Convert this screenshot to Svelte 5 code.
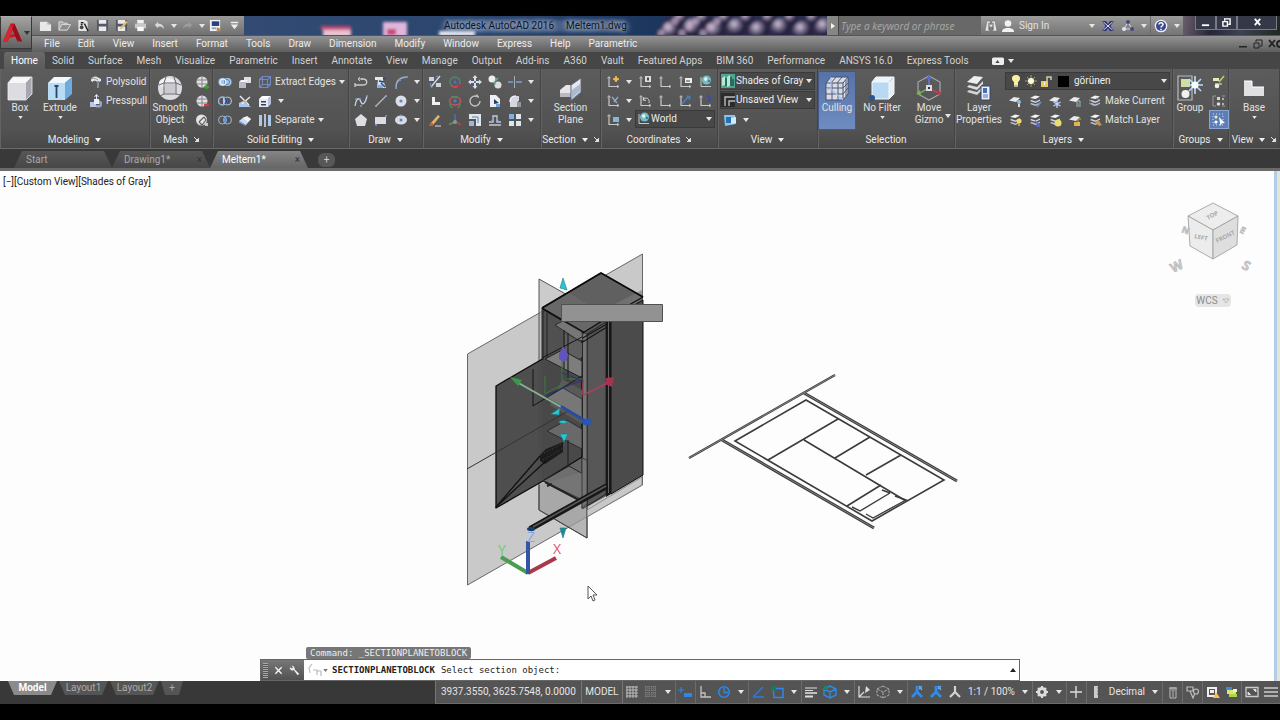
<script>
  const down = '<path d="M4 5.500h6L7 9.500z" fill="#eee"/>';
  const axes = '<path d="M3 2v9.500h9.500" fill="none" stroke="#c9c9c9" stroke-width="1.200"/><path d="M1.500 3.500 3 1.500l1.500 2M11 10l2 1.500-2 1.500" fill="none" stroke="#c9c9c9" stroke-width=".8"/>';
  const sheets = '<path d="m2 4 5-2.500 5 1L7.500 5z" fill="#f2f2f4"/><path d="m2 7 1.500-1 4 1.500L12 5.500v1.200L7.500 9z" fill="#d8d9e2"/><path d="m2 10 1.500-1 4 1.500L12 8.500v1.200L7.500 12z" fill="#c3c5d4"/>';
  const oneSheet = '<path d="M1 6.500 6 3l6 1-4 4z" fill="#e9e9ee"/>';

  const icons = {
    down,
    newdoc: '<path d="M1 3h8l4 3v7H1z" fill="#e8e8e8"/><path d="M9 3v3h4" fill="#aaa"/>',
    open: '<path d="M1 12V3h4l1 1.500h4V6" fill="#a9a9a9" stroke="#ddd"/><path d="m1 12 3-6h9.500L10 12z" fill="#8e8e8e" stroke="#ddd"/>',
    opensheet: '<path d="M1.500 1h7l3 2v10h-10z" fill="#e5e5e5"/><path d="m8 5 4 8M4 4h3M4 6h2" stroke="#222" stroke-width="1.500"/><circle cx="5" cy="9" r="2" fill="#444"/>',
    save: '<path d="M1 1h12v12H1z" fill="#555a62"/><path d="M3 1h8v4H3zM3 8h8v5H3z" fill="#e9e9ee"/>',
    saveas: '<path d="M1 1h12v12H1z" fill="#555a62"/><path d="M3 1h8v4H3zM3 8h8v5H3z" fill="#e9e9ee"/><path d="m6 9 6-7 1.500 1.500-6 7-2 .5z" fill="#e9c268"/>',
    print: '<path d="M3.500 1h7v4h-7z" fill="#f1f1f1"/><path d="M1 5h12v5H1z" fill="#c9c9c9"/><path d="M3.500 8.500h7V13h-7z" fill="#fafafa"/>',
    undo: '<path d="M5.500 3 2 6.500 5.500 10V8c4 0 5 .5 6 3 .6-4-2-6-6-6z" fill="#dadada"/>',
    redo: '<path d="M8.500 3 12 6.500 8.500 10V8c-4 0-5 .5-6 3-.6-4 2-6 6-6z" fill="#9d9d9d"/>',
    sheetset: '<path d="M1 1h11v12H1z" fill="#f2f2f2"/><path d="M3 2.500h8v5H3z" fill="#27417a"/><path d="M3 9h5v2H3z" fill="#8aa0c0"/><path d="m9 9 4 2-2 2.500-3-1z" fill="#c98345"/>',
    more: '<path d="M3 3h8v1.500H3zM3 6h8l-4 5z" fill="#eee"/>',
    binoc: '<path d="M3 2h3v3l1 .5L8 5V2h3l2 10H8.500V8h-3v4H1z" fill="#e5e5e5" stroke="#777" stroke-width=".6"/><path d="M5 4v7M9 4v7" stroke="#555"/>',
    person: '<circle cx="7" cy="4.500" r="3.300" fill="#f2f2f2"/><path d="M1 13c0-3 2-3.500 4.500-4h3c2.500.5 4.500 1 4.500 4z" fill="#f2f2f2"/>',
    exchange: '<path d="M1 2h4l2 3 2-3h4L9.500 7l3.500 5H9L7 9l-2 3H1l3.500-5z" fill="#2c2f78"/><path d="m2.500 3 9 8M11.500 3l-9 8" stroke="#dfe0f4"/>',
    share: '<path d="M7 3 3 10h8z" fill="none" stroke="#d5d5e5"/><circle cx="7" cy="3" r="2" fill="#424a80"/><circle cx="3" cy="10" r="2" fill="#e4e4ef"/><circle cx="11" cy="10" r="2" fill="#424a80"/>',
    help: '<circle cx="7" cy="7" r="6.300" fill="#f0f1f8"/><circle cx="7" cy="7" r="5" fill="#3a4a90"/><path d="M5 5.500C5 3 9 3 9 5.500 9 7 7 7 7 8.500M7 9.800v1.400" fill="none" stroke="#fff" stroke-width="1.500"/>',
    ribbonplay: '<rect x="1" y="3.500" width="12" height="7.500" rx="1.500" fill="#eee"/><path d="M4.500 9h4L6.500 6z" fill="#444"/>',

    polysolid: '<path d="M2 4c1-2 4-3 6-2l4 2v2l-2 1v5l-2 1V7C6 5 4 6 4 7L2 6z" fill="#e4e4ea"/><path d="M8 6v7l2-1V6z" fill="#8c8d99"/><path d="m2 4 3-1 4 2" stroke="#777" fill="none" stroke-width=".7"/>',
    presspull: '<path d="M1 8h6v5H1z" fill="#bcc5e6"/><path d="M5 5h5v5H5z" fill="#eceefa"/><path d="m10 6 3 2v4l-3-2zM7 11h4l2 1-2 1.500H7z" fill="#95a3d5"/><path d="M7.500 5V1M5.500 3l2-2.500 2 2.500" stroke="#e6e9ff" fill="none"/>',
    meshplus: '<ellipse cx="7" cy="7" rx="5.500" ry="5.500" fill="#e1e1e3"/><path d="M2 5h10M2 9h10M7 2v10" stroke="#828288"/><path d="M9 12h5M11.500 9.500v5" stroke="#3e9f35" stroke-width="2"/>',
    meshminus: '<ellipse cx="7" cy="7" rx="5.500" ry="5.500" fill="#e1e1e3"/><path d="M2 5h10M2 9h10M7 2v10" stroke="#828288"/><path d="M9 11h5" stroke="#d23d39" stroke-width="2.200"/>',
    meshrefine: '<circle cx="6.500" cy="7" r="5.500" fill="#e4e4e6"/><path d="m4 9 5-5M9 4l2 3-4 5-3-3" fill="none" stroke="#5f5f63" stroke-width="1.200"/><path d="M10 10h3v3h-3z" fill="#c9c9cc"/>',
    union: '<circle cx="4.500" cy="7" r="4" fill="#a6caec"/><circle cx="9.500" cy="7" r="4" fill="#a6caec"/><circle cx="9" cy="7" r="2.500" fill="none" stroke="#5b82b2"/><circle cx="5" cy="7" r="3" fill="none" stroke="#eef6ff"/>',
    subtract: '<circle cx="9.500" cy="7" r="4" fill="none" stroke="#c2c9d6"/><circle cx="4.500" cy="7" r="4" fill="none" stroke="#98b7df" stroke-width="1.500"/><path d="M5 3.500c3 1 3 6 0 7z" fill="#a8cdf1"/><path d="M7 4c2 2 2 4 0 6" stroke="#234c8d" stroke-width="1.500" fill="none"/>',
    intersect: '<circle cx="4.500" cy="7" r="4" fill="none" stroke="#9bb8da"/><circle cx="9.500" cy="7" r="4" fill="none" stroke="#9bb8da"/><path d="M7 4c2 2 2 4 0 6-2-2-2-4 0-6z" fill="#5f9bdc"/>',
    presspl: '<path d="M6 2h7v6H8v2H6z" fill="#dcdde6"/><path d="M1 7h7v6H1z" fill="#b9bbc9"/><path d="M1 7 3 5h7L8 7z" fill="#f4f4fa"/>',
    slice: '<path d="M1 13V9l4-2 8 6z" fill="#a8c7ef"/><path d="m2 2 9 9M12 3 4 10" stroke="#e8ecf5" stroke-width="1.400"/><path d="m5 6 3 1-1 2z" fill="#e39b40"/>',
    thicken: '<path d="m1 8 5-4 7 2-5 6z" fill="#c9dcf3"/><path d="m1 8 7 4v1L1 9.500z" fill="#7fa5d6"/><path d="m5 5 4-2 4 3-3 3z" fill="#f2f4f8"/>',
    extractedges: '<path d="M1.500 4.500h8v8h-8zM4.500 1.500h8v8h-8zM1.500 4.500l3-3M9.500 4.500l3-3M9.500 12.500l3-3M1.500 12.500l3-3" fill="none" stroke="#7088c4" stroke-width="1.100"/>',
    facecube: '<path d="M1 5h9v8H1z" fill="#e7eaf4"/><path d="m1 5 3-3h9l-3 3z" fill="#fff"/><path d="m10 5 3-3v8l-3 3z" fill="#b8c0db"/><path d="M3 7h5v1.500H3zM3 10h5v1.500H3z" fill="#31425f"/>',
    separate: '<path d="M1 2h3v11H1z" fill="#a9c9ee"/><path d="M10 2h3v11h-3z" fill="#a9c9ee"/><path d="M7 1v13" stroke="#eef" stroke-width="1.400"/>',

    polyline: '<path d="M1 10h8c5 0 5-6 0-6H7M1 8v4" fill="none" stroke="#c8cad0" stroke-width="1.300"/><path d="M9 4H4M4 4l2-2M4 4l2 2" stroke="#c8cad0" fill="none"/>',
    spline3: '<path d="M1 2h8v3H1z" fill="#e8e9ee"/><path d="m4 4 5 1 3 8H3z" fill="#cfe0f5"/><path d="M5 6l5 1M9 3l3 1M7 8l4 4" stroke="#31486e" stroke-width="1.400" fill="none"/><path d="M4 10h5v3H3z" fill="#7fb0e6"/>',
    arc: '<path d="M2 13C2 6 6 2 13 2" fill="none" stroke="#9cabc8" stroke-width="1.500"/><path d="M1 12h2v2H1zM5 4h2v2H5zM12 1h2v2h-2z" fill="#6c93c8"/>',
    spline: '<path d="M1 12C3 1 6 5 7 8s4 3 6-6" fill="none" stroke="#cdd2dc" stroke-width="1.300"/><path d="M1 5h2M6 12h2M12 2h2M5 5h2" stroke="#6e9bd3" stroke-width="1.600"/>',
    line: '<path d="M2 12 12 2" stroke="#b8bac0" stroke-width="1.200"/><path d="M1 12h2M11 2h2" stroke="#8cabda" stroke-width="1.500"/>',
    circle: '<circle cx="7" cy="7" r="5.500" fill="#dcdfe8"/><circle cx="7" cy="7" r="1.600" fill="#6186c2"/>',
    polygon: '<path d="m7 1 6 5-2 7H3L1 6z" fill="#dedee2"/>',
    rect: '<path d="M1 4h11v7H1z" fill="#dcdce0"/><path d="M11 2h2v2h-2zM1 11h2v2H1z" fill="#6390c8"/>',
    ellipse: '<ellipse cx="7" cy="7" rx="6" ry="4.500" fill="#dadce3"/><circle cx="7" cy="7" r="1.500" fill="#5a82c2"/><circle cx="7" cy="2.500" r="1" fill="#7ba1da"/>',

    meshedit: '<path d="M1 2h5v4H1zM8 8h5v4H8z" fill="#cfd3dc"/><path d="M12 1 3 12" stroke="#c8d5e9" stroke-width="1.500"/><path d="m8 2 2-1M2 8l2 5" stroke="#659ad9"/>',
    gizrot: '<circle cx="7" cy="7" r="5" fill="none" stroke="#4a8b67" stroke-width="1.400"/><path d="M3 10a5 5 0 0 0 8 0" stroke="#c74d4b" fill="none" stroke-width="1.400"/><path d="M7 3v4l4 3" fill="none" stroke="#4760b0" stroke-width="1.400"/><circle cx="7" cy="7" r="1.500" fill="#5570bb"/><circle cx="11.500" cy="11" r="1.800" fill="#b8303c"/>',
    move: '<path d="M7 0 9.500 3H8v3h3V4.500L14 7l-3 2.500V8H8v3h1.500L7 14l-2.500-3H6V8H3v1.500L0 7l3-2.500V6h3V3H4.500z" fill="#d5dff0"/><path d="M6 6h2v2H6z" fill="#5778af"/>',
    copy: '<circle cx="4" cy="4" r="3.500" fill="#eee"/><circle cx="10" cy="10" r="3.500" fill="#ddd"/><path d="m7 6 3-3M8 9 5 7" stroke="#69b19b" stroke-width="1.500"/>',
    trim: '<path d="M0 7h5M8 7h6" stroke="#77a3dc" stroke-width="1.500"/><path d="M6.500 1v12" stroke="#a9abb3"/>',
    lshape: '<path d="M4 3h3v5h5v3H4z" fill="#f0f0f3"/>',
    gizscale: '<ellipse cx="7" cy="7" rx="5.500" ry="4" fill="none" stroke="#c25461" stroke-width="1.500"/><path d="M2 10a5 5 0 0 0 10 0M3 3h7" fill="none" stroke="#469554" stroke-width="1.400"/><circle cx="7" cy="7" r="1.800" fill="#5a74c1"/>',
    rotate: '<circle cx="7" cy="7" r="5" fill="none" stroke="#bfc1c6" stroke-width="1.400" stroke-dasharray="27 4"/><path d="m9 0 2 3-4 0z" fill="#bfc1c6"/>',
    mirror: '<path d="M2 1h6l4 4v8H2z" fill="#eceef2"/><path d="M6 5 11 9 6 10z" fill="#243a6a"/><path d="M8 10h4v3H8z" fill="#77a2d9"/>',
    fillet: '<path d="M2 13V7c0-3 2-5 5-5h4v5h-1v6z" fill="#d5d7dd"/><path d="M2 8c0-4 2-6 6-6" stroke="#eef" fill="none" stroke-width="1.500"/><path d="M9 8h4v5H9z" fill="#94979f"/>',
    erase: '<path d="m2 11 8-9 2 1.500L5 12z" fill="#e7b36b"/><path d="M2 10h3v3H1z" fill="#d85a2b"/><path d="M7 13h6" stroke="#ddd"/>',
    gizmove: '<path d="M7 9V1" stroke="#4e6cae" stroke-width="1.600"/><path d="M7 9 1 11.500" stroke="#4ba04e" stroke-width="1.600"/><path d="m7 9 6 2.500" stroke="#c0444a" stroke-width="1.600"/><circle cx="7" cy="9" r="2" fill="#909297"/>',
    scale: '<path d="M1 1h12v12H8V6H1z" fill="#e0e4ec"/><path d="M1 8h5v5H1z" fill="#9cb6dc"/><path d="M4 4h6v6" stroke="#5b83bd" fill="none"/>',
    offset: '<path d="M1 12h12M1 9h4V3h4v6h4" fill="none" stroke="#c4c9d4" stroke-width="1.400"/><path d="M5 5 3 9M9 5l2 4" stroke="#6b93cb"/>',
    array: '<path d="M1 1h5v5H1z" fill="#79b1e9"/><path d="M8 1h5v5H8zM1 8h5v5H1zM8 8h5v5H8z" fill="#dde5ef"/>',

    ucs: axes,
    ucsy: axes + '<path d="m10 1 1 2.500 2 .5-2 1-1 2-1-2-2-1 2-.500z" fill="#f6bc45" stroke="#f6bc45"/>',
    ucsv: axes + '<path d="M6 3 11 9M8 8 12 3" stroke="#8ea8ce" stroke-width="1.400"/>',
    ucsb: axes + '<path d="M7 4h6v5H7z" fill="#86b7db"/>',
    ucsd: axes + '<path d="M7 1h6v6H7z" fill="#ddd"/><path d="M9 2.500h2v3H9z" fill="#444"/>',
    ucsf: axes + '<path d="M7 3h7v5H7z" fill="#eee"/><path d="M8 6h4" stroke="#444"/>',
    globe: '<path d="M3 2v9.500h10" fill="none" stroke="#c9c9c9"/><circle cx="8.500" cy="5" r="4.500" fill="#74bcc7"/><path d="M6 3c3-2 4 0 3 2s-3 1-3-2z" fill="#e7f2ea"/><path d="M10 6h2" stroke="#2b6d82" stroke-width="1.500"/>',
    ucsback: axes + '<path d="M5 6c3-4 7-1 6 3M5 6l3 .5M5 6l1-3" fill="none" stroke="#d5d5d5"/>',
    ucsz: axes + '<path d="m4 10 6-7M9 2l3 1-1 3" stroke="#4382ce" stroke-width="1.400" fill="none"/>',
    ucs3: axes + '<path d="M9 2c4 0 4 4 1 5" stroke="#3948b8" stroke-width="1.800" fill="none"/>',
    visual: '<path d="M0 0h14v14H0z" fill="#4fa58e"/><path d="M1 4 4 2v9l-3 1zM6 3l3-2v11l-3 1z" fill="#b8e7d5"/><path d="M5 4v8M10 3v9M12 5v7" stroke="#174f45" stroke-width="1.300"/>',
    viewicon: '<path d="M0 0h14v14H0z" fill="#2c2c2c"/><path d="M4 13V4h10M8 13V8h6" fill="none" stroke="#bbb" stroke-width="1.400"/>',
    navview: '<path d="M1 2h11l1 9-11 2z" fill="#8ac4ee"/><path d="M3 4h5v6H3z" fill="#2572b2"/><path d="m8 5 5-1v6l-5 1z" fill="#d1ecfc"/>',

    bulb: '<path d="M7 1c5 0 5 5 2 7v3H5V8C2 6 2 1 7 1z" fill="#f8efa0"/><path d="M5 11h4v2H5z" fill="#b3b5b8"/>',
    sun: '<path d="M7 1v12M1 7h12M3 3l8 8M11 3l-8 8" stroke="#a19d74"/><circle cx="7" cy="7" r="3" fill="#fffbd4"/>',
    unlock: '<path d="M2 7h7v6H2z" fill="#f0c85e"/><path d="M8 7V3h4v3" fill="none" stroke="#d1c9ac" stroke-width="1.500"/><path d="M5 8h1v3H5z" fill="#fff"/>',
    layoff: oneSheet + '<circle cx="11" cy="8" r="2" fill="#8ac2df"/><path d="M10 10h2v3h-2z" fill="#ddd"/>',
    layiso: sheets + '<path d="M9 13 13 8" stroke="#6c91d2" stroke-width="1.500"/>',
    layfrz: oneSheet + '<path d="M9 6v8M5.500 8l7 4M12.500 8l-7 4" stroke="#c5d2ff" stroke-width="1.300"/>',
    laylock: oneSheet + '<path d="M8 9h5v4H8z" fill="#74868a"/><path d="M9 9V7h3v2" stroke="#9ec1bd" fill="none"/>',
    laycur: sheets + '<path d="m1 6 5 3M1 9l5 3M8 4l4 2" stroke="#8e9cb4"/>',
    layon: sheets + '<circle cx="11" cy="8" r="2.500" fill="#f5d873"/><path d="M10 10h2v3h-2z" fill="#c39d42"/>',
    layuniso: sheets + '<path d="m7 8 5 5M8 13h4" stroke="#596fd0" stroke-width="1.500"/>',
    laythaw: sheets + '<circle cx="10" cy="10" r="3.500" fill="#eadf6c"/>',
    layunlock: oneSheet + '<path d="M6 9h6v4H6z" fill="#e1b44f"/><path d="M10 9V6h3" stroke="#c6a861" fill="none"/>',
    laymatch: sheets + '<path d="m7 9 3-2 4 5-3 1z" fill="#cb9250"/>',
    ungroup: '<path d="M1 3h6v3H1z" fill="#e7ebac"/><path d="m7 7 5-6M3 9h7" stroke="#b1d46d" stroke-width="1.600"/><circle cx="5" cy="11" r="2.300" fill="#eee"/>',
    groupedit: '<path d="M4 2H1v10h3M10 2h3M10 12h3" fill="none" stroke="#999"/><path d="M5 3h3v3H5z" fill="#d5d9c2"/><circle cx="6.500" cy="10" r="1.800" fill="#ddd"/><path d="M11 4v2M11 9v2" stroke="#ccc" stroke-width="1.500"/>',
    groupsel: '<path d="M1 1h10v11H1z" fill="none" stroke="#d7e1f5" stroke-dasharray="1 2"/><circle cx="4" cy="4" r="1.600" fill="#e8f0b0"/><circle cx="4" cy="9" r="1.600" fill="#fff"/><path d="m7 4 6 6-3 .3L8.500 13z" fill="#fff"/>',

    grid: '<path d="M1 2h12M1 5h12M1 8h12M1 11h12M2 1v12M5 1v12M8 1v12M11 1v12" stroke="#bdbdbd" stroke-width="1"/>',
    snap: '<path d="M1 2h12M1 5h12M1 8h12M1 11h12M2 1v12M5 1v12M8 1v12M11 1v12" stroke="#8d8d8d" stroke-dasharray="1 1"/>',
    dyn: '<path d="M3 2v6M0 5h6" stroke="#2c83e4" stroke-width="1.200"/><path d="M6 8h8v4H6z" fill="#2e86e8"/>',
    ortho: '<path d="M3 1v11h10M3 8h4v4" fill="none" stroke="#c3c3c3" stroke-width="1.300"/>',
    polar: '<circle cx="7" cy="7" r="5.300" fill="none" stroke="#2e86e8" stroke-width="1.600"/><path d="M7 3v4.500h4" fill="none" stroke="#2e86e8" stroke-width="1.300"/>',
    otrack: '<path d="M2 12 12 2M2 12h11" stroke="#2e78dc" stroke-width="1.500"/>',
    osnap: '<path d="M3 3.500h10v9H4z" fill="none" stroke="#2e86e8" stroke-width="1.500"/><path d="M1 1h5v5H1z" fill="#1e7a55"/>',
    lwt: '<path d="M1 3h12M1 5.500h8" stroke="#ddd" stroke-width="1"/><path d="M1 8h12" stroke="#ddd" stroke-width="1.600"/><path d="M1 11.500h8" stroke="#ddd" stroke-width="2"/>',
    osnap3: '<path d="m7 1 6 3v6l-6 3-6-3V4zM1 4l6 3 6-3M7 7v6" fill="none" stroke="#2f8ae2" stroke-width="1.400"/><path d="M1 1h4v4H1z" fill="#1c8658"/>',
    dynucs: '<path d="M2 1v11h11M2 12l5-5" fill="none" stroke="#ddd" stroke-width="1.200"/><path d="m9 1 4 4-5 3z" fill="#ddd"/>',
    cubeo: '<path d="m7 1 6 3v6l-6 3-6-3V4zM1 4l6 3 6-3M7 7v6" fill="none" stroke="#aaa" stroke-dasharray="3 1"/>',
    annoa: '<path d="M7 1v6L2 12M7 7l5 5" stroke="#2f8cea" stroke-width="2.800" fill="none"/><path d="m9 1 3 4M12 1 9 4" stroke="#64adf5" stroke-width="1.300"/>',
    anno: '<path d="M7 1v6L2 12M7 7l5 5" stroke="#d2d2d2" stroke-width="2.200" fill="none"/>',
    gear: '<circle cx="7" cy="7" r="3.400" fill="none" stroke="#ddd" stroke-width="3"/><path d="M7 1v2M7 11v2M1 7h2M11 7h2M3 3l1 1M10 10l1 1M11 3l-1 1M4 10l-1 1" stroke="#ddd" stroke-width="2"/>',
    plus: '<path d="M7 1v12M1 7h12" stroke="#ddd" stroke-width="1.400"/>',
    ruler: '<path d="M5 1h4v12H5z" fill="#ccc"/><path d="M8 3h1M8 6h1M8 9h1" stroke="#777"/>',
    props: '<path d="M4 3h6v10H4zM3 3h8M5 5h4M7 6v6" fill="none" stroke="#bbb"/>',
    isolate: '<path d="M1 2h6v4H1zM10 4a2.500 2.500 0 1 1 0 5 2.500 2.500 0 0 1 0-5M4 6l3 7 2-5" fill="none" stroke="#bcbcbc" stroke-width="1.200"/>',
    hardware: '<path d="M1 2h10v10H1z" fill="#eee"/><path d="M3 4h6v6H3z" fill="#565656"/><path d="M4 5h4v3H4z" fill="#eee"/><path d="m10 7 4 6H7z" fill="#f3c15c"/>',
    palette: '<path d="M1 2h6v3H1z" fill="#3d8ad6"/><path d="M2 5h9v4H2z" fill="#e2e46a"/><path d="M4 9h8v3H4z" fill="#a4d94a"/><path d="M8 4h4v3H8z" fill="#eed"/>',
    clean: '<path d="M1 2.500h12v9H1z" fill="none" stroke="#ccc" stroke-width="1.300"/><path d="M3 9.500V7l2.500 2.500zM11 4.500V7L8.500 4.500z" fill="#ddd" stroke="#ddd"/>',
    menu: '<path d="M0 3h14M0 7h14M0 11h14" stroke="#ccc" stroke-width="1.700"/>',
    wrench: '<path d="M1 3a3.500 3.500 0 0 0 5 3.500L11 13l2-2-6-5.500A3.500 3.500 0 0 0 3 1l2 2-1 1.500z" fill="#f1f1f1"/>',
    close: '<path d="m3 3 8 8M11 3l-8 8" stroke="#f4f4f4" stroke-width="1.800"/>',
    prompt: '<path d="M4 1 1 5l1 5M5 7h4v5M9 8h4v5" fill="none" stroke="#bbb" stroke-width="1.200"/>'
  };

  const big = {
    box: '<path d="M1 8h18v17H1z" fill="#dcdce2"/><path d="m1 8 5-6h19l-6 6z" fill="#f7f7fa"/><path d="m19 8 6-6v17l-6 6z" fill="#a7a7af"/><path d="m1 8 5-6h19v17l-6 6H1z" fill="none" stroke="#efeff2" stroke-width=".8"/>',
    extrude: '<path d="M1 8h17v17H1z" fill="#b9dbf4"/><path d="m1 8 6-6h18l-7 6z" fill="#eff8ff"/><path d="m18 8 7-6v17l-7 6z" fill="#6fabdd"/><path d="M9.500 23V11M7.500 11h4" stroke="#27466a" fill="none" stroke-width="1.800"/>',
    smooth: '<circle cx="13" cy="13" r="12" fill="#dcdcdf"/><ellipse cx="10" cy="8" rx="8" ry="5" fill="#f2f2f3"/><path d="M7 8h12v11H7zM2 10l5-2M19 8l5 2M7 19l-4 2M19 19l4 1M7 8 9 2M19 8l-2-6" fill="none" stroke="#66666e" stroke-width="1"/><path d="M8 9h10v9H8z" fill="#c9cad2"/>',
    section: '<path d="m2 15 6-5h8v9l-5 3H2z" fill="#e6e6e9"/><path d="M2 18h11v4H2z" fill="#babac0"/><path d="m13 10 10-7v14l-10 9z" fill="#e3e8f3" stroke="#5e6473"/><path d="m14 15 8-6v7l-8 7z" fill="#acbace"/><path d="m13 25 10-8" stroke="#6d88bb"/>',
    culling: '<path d="M2 8h17v17H2zM2 8l5-6h17v17l-5 6M19 8l5-6" fill="#dadbe5" stroke="#45516d"/><path d="M2 13h17l5-5M2 19h17l5-6M8 8v17M14 8v17M7 8l5-6M13 8l5-6M22 5v16" stroke="#4d5a79" fill="none"/><path d="M7 2v12H2M7 14l12 11" fill="none" stroke="#aac0ec" stroke-width="1.200"/>',
    filter: '<path d="M3 7h17v17H3z" fill="#b9d8f2"/><path d="m3 7 4-5h18l-5 5z" fill="#eaf5fd"/><path d="m20 7 5-5v17l-5 5z" fill="#e9eef4"/><path d="M3 7h17v17H3zM3 7l4-5h18v17l-5 5" fill="none" stroke="#f4f7fa"/><circle cx="3" cy="23" r="3" fill="#2a558d"/>',
    gizmo: '<path d="m13 1 11 6v12l-11 6L2 19V7z" fill="none" stroke="#a6a6a6" stroke-width="1.200"/><path d="M13 13V3" stroke="#687cc0" stroke-width="1.600"/><path d="m13 13 9 5" stroke="#b44b54" stroke-width="1.500"/><path d="m13 13-9 5" stroke="#68a85e" stroke-width="1.500"/><path d="M10 4 13 0l3 4z" fill="#526cc6"/><path d="m22 15 4 4-5 1z" fill="#c2334a"/><path d="m4 15-4 4 5 1z" fill="#74b748"/><path d="M10 10h6v6h-6z" fill="#dcdce2"/><path d="M12 12h2v2h-2z" fill="#334"/>',
    layerprops: '<path d="m1 7 7-6 9 1-6 7z" fill="#eee"/><path d="m1 12 2-2 8 2 6-6v3l-6 6z" fill="#ddd"/><path d="m1 17 2-2 8 2 5-5v3l-5 5z" fill="#d3d3d5"/><path d="M15 11h9v14h-9z" fill="#e9effb" stroke="#2f466e"/><path d="M17 13h4v5h-4z" fill="#466fb1"/><path d="M17 20h5M17 22h5" stroke="#5b72a0"/>',
    group: '<path d="M1 1h14v24H1z" fill="none" stroke="#b9b9b9" stroke-width="1.200"/><path d="M4 4h9v8H4z" fill="#d0df9d"/><circle cx="8.500" cy="19" r="4" fill="#f1f1f1"/><path d="M18 1v18M9 10h17M12 4l12 12M24 4 12 16" stroke="#b8dcff" stroke-width="1.600"/><circle cx="18" cy="10" r="3.500" fill="#fff"/>',
    base: '<path d="M3 6h8v6h12v9H3z" fill="#e0e0e2"/><path d="M3 6h8v6h12" fill="none" stroke="#fff"/>'
  };

  const menus = ['File', 'Edit', 'View', 'Insert', 'Format', 'Tools', 'Draw', 'Dimension', 'Modify', 'Window', 'Express', 'Help', 'Parametric'];
  const tabs = ['Home', 'Solid', 'Surface', 'Mesh', 'Visualize', 'Parametric', 'Insert', 'Annotate', 'View', 'Manage', 'Output', 'Add-ins', 'A360', 'Vault', 'Featured Apps', 'BIM 360', 'Performance', 'ANSYS 16.0', 'Express Tools'];
  const quick = ['newdoc', 'open', 'opensheet', 'save', 'saveas', 'print', 'undo', '>', 'redo', '>', 'sheetset', 'more'];
  const draw = [['polyline', 'spline3', 'arc', '>'], ['spline', 'line', 'circle', '>'], ['polygon', 'rect', 'ellipse', '>']];
  const modify = [['meshedit', 'gizrot', 'move', 'copy', 'trim', '>'], ['lshape', 'gizscale', 'rotate', 'mirror', 'fillet', '>'], ['erase', 'gizmove', 'scale', 'offset', 'array', '>']];
  const coords = [['ucsy', '>', 'ucsd', 'ucs', 'ucsf', 'globe'], ['ucsv', '>', 'ucsback', 'ucs', 'ucsz', 'ucs3']];
  const status = ['grid', 'snap', '>', '|', 'dyn', '|', 'ortho', 'polar', '>', '|', 'otrack', 'osnap', '>', '|', 'lwt', 'osnap3', '>', '|', 'dynucs', 'cubeo', '>', '|', 'annoa', 'annoa', 'anno'];
</script>

{#snippet ic(name)}
  <svg class="ic" viewBox="0 0 14 14" aria-hidden="true">{@html icons[name]}</svg>
{/snippet}

{#snippet tri()}
  <svg class="tri" viewBox="0 0 6 4" aria-hidden="true"><path d="M0 0h6L3 4z" fill="#e6e6e6" /></svg>
{/snippet}

{#snippet tools(list)}
  {#each list as t}
    {#if t === '>'}
      <button class="drop" aria-label="More options">{@render tri()}</button>
    {:else if t === '|'}
      <span class="sep"></span>
    {:else}
      <button class="tool" aria-label={t}>{@render ic(t)}</button>
    {/if}
  {/each}
{/snippet}

{#snippet bigBtn(icon, label, arrow, extra = '')}
  <button class="big {extra}">
    <svg viewBox="0 0 26 26" aria-hidden="true">{@html big[icon]}</svg>
    <span>{label}</span>
    {#if arrow}{@render tri()}{/if}
  </button>
{/snippet}

{#snippet heading(label, arrow, launch)}
  <h2>{label}{#if arrow}<svg class="htri" viewBox="0 0 6 4" aria-hidden="true"><path d="M0 0h6L3 4z" fill="#eee" /></svg>{/if}
    {#if launch}<svg class="launch" viewBox="0 0 5 5" aria-hidden="true"><path d="M0 0l3 3M5 1v4H1z" fill="#ddd" stroke="#ddd" /></svg>{/if}
  </h2>
{/snippet}

<div class="app">
  <header>
    <button class="logo" aria-label="Application menu">
      <svg class="mark" viewBox="0 0 20 20" aria-hidden="true">
        <path d="M0 19 8 0h4l8 19h-5l-2-5-6 1-2 4z" fill="#c31522" />
        <path d="m8 0 2 6-2 6-3 7H0z" fill="#d32832" /><path d="m12 0 8 19-5-1-5-12z" fill="#96101b" />
        <path d="m8 12 2-5 2 4z" fill="#6d6d6d" />
      </svg>
      <svg class="tri" viewBox="0 0 6 4" aria-hidden="true"><path d="M0 0h6L3 4z" fill="#333" /></svg>
    </button>
    <div class="bars">
      <div class="title">
        <div class="quick">{@render tools(quick)}</div>
        <div class="glass">
          <svg class="wall" viewBox="0 0 585 19" preserveAspectRatio="xMidYMid slice" aria-hidden="true">
            <defs>
              <linearGradient id="sky" x1="0" x2="1"><stop offset="0" stop-color="#334b73" /><stop offset=".35" stop-color="#2b466f" /><stop offset=".7" stop-color="#1d365d" /></linearGradient>
              <radialGradient id="pearl" cx=".35" cy=".3"><stop offset="0" stop-color="#d3c6d8" /><stop offset=".4" stop-color="#8a7f9c" /><stop offset="1" stop-color="#25223f" /></radialGradient>
              <filter id="soft" x="-20%" y="-50%" width="140%" height="200%"><feGaussianBlur stdDeviation="1.600" /></filter>
            </defs>
            <rect width="585" height="19" fill="url(#sky)" />
            <g filter="url(#soft)">
              <rect x="78" y="10" width="30" height="4" fill="#c54a72" /><rect x="80" y="14" width="28" height="7" fill="#e8c3d2" />
              <rect x="140" y="6" width="24" height="15" fill="#e3b5dc" /><rect x="144" y="13" width="9" height="6" fill="#c1446f" />
              <rect x="196" y="15" width="36" height="5" fill="#e9ecf5" />
              <rect x="204" y="4" width="178" height="12" fill="#8c9cba" opacity=".35" />
              <path d="M412 20 424 0h170v20z" fill="#2d2947" />
              {#each Array(8) as _, i}
                <circle cx={428 + i * 22} cy={i % 2 ? 12 : 15} r="10" fill="url(#pearl)" />
                <circle cx={438 + i * 22} cy="2" r="7" fill="url(#pearl)" />
              {/each}
              {#each Array(9) as _, i}
                <circle cx={418 + i * 7} cy={17 - (i % 3) * 6} r="3.500" fill="#c5abc4" opacity=".7" />
              {/each}
            </g>
          </svg>
          <h1><span>Autodesk AutoCAD 2016</span><span>Meltem1.dwg</span></h1>
        </div>
        <div class="find"><button class="expand" aria-label="Collapse search"><svg viewBox="0 0 4 6" aria-hidden="true"><path d="M0 0l4 3-4 3z" fill="#f4f4f4" /></svg></button><input type="search" placeholder="Type a keyword or phrase" aria-label="Search help" /></div>
        <div class="account">
          <button class="tool" aria-label="Search">{@render ic('binoc')}</button>
          <button class="sign">{@render ic('person')}<span>Sign In</span></button>
          {@render tools(['>', 'exchange', 'share', '>'])}
          <span class="sep"></span>
          {@render tools(['help', '>'])}
        </div>
        <div class="win">
          <button aria-label="Minimize"><svg viewBox="0 0 10 10"><path d="M1 7h8v2H1z" fill="#fff" /></svg></button>
          <button aria-label="Restore"><svg viewBox="0 0 10 10"><path d="M1 4h5v5H1zM3 3V1h6v6H7" fill="none" stroke="#fff" stroke-width="1.600" /></svg></button>
          <button class="x" aria-label="Close"><svg viewBox="0 0 10 10"><path d="m2 1 6 7M8 1 2 8" stroke="#fff" stroke-width="2" /></svg></button>
        </div>
      </div>
      <nav class="menu" aria-label="Menu bar">
        {#each menus as m}<button>{m}</button>{/each}
        <div class="mdi">
          <button aria-label="Minimize drawing"><svg viewBox="0 0 10 10"><path d="M1 7h8v1.500H1z" fill="#222" /></svg></button>
          <button aria-label="Restore drawing"><svg viewBox="0 0 10 10"><path d="M1 4h5v5H1zM3 3V1h6v6H7" fill="none" stroke="#222" /></svg></button>
          <button aria-label="Close drawing"><svg viewBox="0 0 10 10"><path d="m1 1 6 7M7 1 1 8M12 2c-4 0-4 6 0 6" fill="none" stroke="#222" stroke-width="1.800" /></svg></button>
        </div>
      </nav>
    </div>
  </header>

  <nav class="tabs" aria-label="Ribbon tabs">
    {#each tabs as t, i}<button class:on={i === 0}>{t}</button>{/each}
    <button class="play" aria-label="Ribbon display">{@render ic('ribbonplay')}{@render tri()}</button>
  </nav>

  <div class="ribbon">
    <section>
      <div class="body">
        {@render bigBtn('box', 'Box', true)}
        {@render bigBtn('extrude', 'Extrude', true)}
        <div class="stack inset">
          <button class="text">{@render ic('polysolid')}Polysolid</button>
          <button class="text">{@render ic('presspull')}Presspull</button>
        </div>
      </div>
      {@render heading('Modeling', true, false)}
    </section>
    <section>
      <div class="body">
        {@render bigBtn('smooth', 'Smooth Object', false)}
        <div class="stack">{@render tools(['meshplus', 'meshminus', 'meshrefine'])}</div>
      </div>
      {@render heading('Mesh', false, true)}
    </section>
    <section>
      <div class="body">
        <div class="stack">
          <div class="line">{@render tools(['union', 'presspl'])}<button class="text">{@render ic('extractedges')}Extract Edges</button>{@render tools(['>'])}</div>
          <div class="line">{@render tools(['subtract', 'slice', 'facecube', '>'])}</div>
          <div class="line">{@render tools(['intersect', 'thicken'])}<button class="text">{@render ic('separate')}Separate</button>{@render tools(['>'])}</div>
        </div>
      </div>
      {@render heading('Solid Editing', true, false)}
    </section>
    <section>
      <div class="body"><div class="stack">{#each draw as r}<div class="line">{@render tools(r)}</div>{/each}</div></div>
      {@render heading('Draw', true, false)}
    </section>
    <section>
      <div class="body"><div class="stack">{#each modify as r}<div class="line">{@render tools(r)}</div>{/each}</div></div>
      {@render heading('Modify', true, false)}
    </section>
    <section>
      <div class="body mid">{@render bigBtn('section', 'Section Plane', false)}</div>
      {@render heading('Section', true, true)}
    </section>
    <section>
      <div class="body">
        <div class="stack wide">
          {#each coords as r}<div class="line">{@render tools(r)}</div>{/each}
          <div class="line">
            {@render tools(['ucsb', '>'])}
            <label class="pick">{@render ic('globe')}<select aria-label="Coordinate system"><option>World</option></select>{@render tri()}</label>
          </div>
        </div>
      </div>
      {@render heading('Coordinates', false, true)}
    </section>
    <section>
      <div class="body">
        <div class="stack wide">
          <label class="pick">{@render ic('visual')}<select aria-label="Visual style"><option>Shades of Gray</option></select>{@render tri()}</label>
          <label class="pick">{@render ic('viewicon')}<select aria-label="Named view"><option>Unsaved View</option></select>{@render tri()}</label>
          <div class="line">{@render tools(['navview', '>'])}</div>
        </div>
      </div>
      {@render heading('View', true, false)}
    </section>
    <section>
      <div class="body spread">
        {@render bigBtn('culling', 'Culling', false, 'on')}
        {@render bigBtn('filter', 'No Filter', true)}
        {@render bigBtn('gizmo', 'Move Gizmo', false)}
        <button class="drop side" aria-label="Gizmo options">{@render tri()}</button>
      </div>
      {@render heading('Selection', false, false)}
    </section>
    <section>
      <div class="body">
        {@render bigBtn('layerprops', 'Layer Properties', false, 'wide')}
        <div class="stack wide">
          <label class="pick layer">{@render ic('bulb')}{@render ic('sun')}{@render ic('unlock')}<span class="swatch"></span><select aria-label="Layer"><option>görünen</option></select>{@render tri()}</label>
          <div class="line">{@render tools(['layoff', 'layiso', 'layfrz', 'laylock'])}<button class="text">{@render ic('laycur')}Make Current</button></div>
          <div class="line">{@render tools(['layon', 'layuniso', 'laythaw', 'layunlock'])}<button class="text">{@render ic('laymatch')}Match Layer</button></div>
        </div>
      </div>
      {@render heading('Layers', true, false)}
    </section>
    <section>
      <div class="body">
        {@render bigBtn('group', 'Group', false, 'slim')}
        <div class="stack">{@render tools(['ungroup', 'groupedit'])}<button class="tool lit" aria-label="Group selection">{@render ic('groupsel')}</button></div>
      </div>
      {@render heading('Groups', true, false)}
    </section>
    <section>
      <div class="body mid">{@render bigBtn('base', 'Base', true)}</div>
      {@render heading('View', true, true)}
    </section>
  </div>

  <div class="docs">
    <button class="doc">Start</button>
    <button class="doc">Drawing1*<i>×</i></button>
    <button class="doc on">Meltem1*<i>×</i></button>
    <button class="add" aria-label="New drawing">+</button>
  </div>

  <main>
    <svg class="scene" viewBox="0 171 1280 510" preserveAspectRatio="xMidYMid slice" role="img" aria-label="Wardrobe model with section planes and its floor plan">
      <g stroke-linejoin="round">
        <path d="M467.500 354 642.500 254v231l-175 100z" fill="#c9c9c9" stroke="#666" />
        <path d="m539 279 48 27v232l-48-28z" fill="#aaa" fill-opacity=".6" stroke="#555" />
        <path d="m542 308 59-35 42 24v178l-33 19-27 15v-9l-41-20z" fill="#555" />
        <path d="m542 308 42 24v168l-42-22z" fill="#5c5c5c" stroke="#333" />
        <path d="m545 314 17 10v110l-17-10z" fill="#4a4a4a" />
        <path d="m562 324 21 12v150l-21-12z" fill="#656565" />
        <path d="m542 308 59-35 42 24-59 35z" fill="#686868" stroke="#111" />
        <path d="m569 293 32-18 38 22-34 18z" fill="#606060" />
        <path d="m609 307 33-17v10l-33 18z" fill="#7b7b7b" opacity=".6" />
        <path d="m611 319 32-19v175l-32 19z" fill="#4b4b4b" stroke="#111" />
        <path d="m587 334 19-12v172l-19 12z" fill="#575757" stroke="#222" />
        <path d="m582 332 5 2v172l-5 3z" fill="#767676" stroke="#222" stroke-width=".7" />
        <path d="M606 320h5v174l-5 3z" fill="#181818" /><path d="M608.500 321v172" stroke="#777" stroke-width=".8" />
        <path d="m542 308 59-35 42 24" fill="none" stroke="#0c0c0c" stroke-width="2" />
        <path d="m643 297-32 18-28 18-41-25M581 339l26-15M581 343l26-16" fill="none" stroke="#161616" stroke-width="1.300" />
        <path d="m496 386 86-50v121l-39 24-47 27z" fill="#484848" fill-opacity=".95" stroke="#0c0c0c" stroke-width="1.300" />
        <path d="m543 310 39 22v6l-39 22z" fill="#505050" />
        <path d="M543 309v51M547 313v45" stroke="#222" />
        <path d="m543 309 41 24" stroke="#111" stroke-width="1.500" />
        <path d="m555 325 8-4 19 11 1 9-5-1z" fill="#777" stroke="#222" stroke-width=".8" />
        <path d="m565 334 17 9v14l-17 8z" fill="#5f5f5f" />
        <path d="m545 359 17-9 20 11v17z" fill="#7d7d7d" stroke="#222" />
        <path d="m562 379 20 11v34l-32-19z" fill="#595959" />
        <path d="m545 397 18-9 19 11v19z" fill="#777" stroke="#222" stroke-width=".7" />
        <path d="m547 431 20-11 15 9v20z" fill="#696969" stroke="#222" stroke-width=".8" />
        <path d="M568 440v27M564 330v38M568 333v48" stroke="#242424" stroke-width="1.200" />
        <path d="M533 369v37l49-30M542 358l40-21" fill="none" stroke="#151515" />
        <path d="m543 481 26-15 14 8v26z" fill="#6e6e6e" stroke="#222" />
        <path d="m539 485 43-13 5 38v28l-48-28z" fill="#888" fill-opacity=".3" />
        <path d="M539 485v25l48 28v-32" fill="none" stroke="#444" />
        <path d="m582 458 5 2v44l-5 4z" fill="#747474" stroke="#222" stroke-width=".7" />
        <path d="m540 455 6-6 17-7v10l-18 12-5-3z" fill="#1c1c1c" /><path d="m544 453 18-9M543 460l20-12" stroke="#444" stroke-dasharray="1 2" />
        <path d="m540 456-44 51 50-46" fill="none" stroke="#111" stroke-width="1.300" />
        <path d="m467 469 103-59" stroke="#333" />
        <path d="m545 482 34 18M547 486l5-2" stroke="#222" stroke-width="2" />
        <path d="m530 529 77-43" stroke="#171717" stroke-width="6" /><path d="m533 527 73-41" stroke="#5a5a5a" stroke-width="1.500" />
        <path d="m587 510 55-33v8l-55 32z" fill="#c7c7c7" fill-opacity=".7" stroke="#777" stroke-width=".7" />
        <path d="M561.500 304.500h101v17h-101z" fill="#929292" stroke="#505050" />
      </g>
      <g fill="none" stroke-linecap="round">
        <path d="m515 381 48 27" stroke="#8ab293" stroke-width="2" /><path d="m562 407 25 15" stroke="#274ca0" stroke-width="3" />
        <path d="M545 376v18l18-10M567 379h16M562 354v25" stroke="#397f3b" />
        <path d="m583 395 27-13M583 380v15" stroke="#aa405c" stroke-width="1.400" /><path d="m546 395 36-15M562 373l21 8" stroke="#30307a" />
      </g>
      <path d="m510 377 12 3-4 6z" fill="#399b46" /><path d="m614 377-8 1-1 6 7 3z" fill="#a63450" /><ellipse cx="587" cy="422" rx="5" ry="3.500" fill="#2857b1" />
      <path d="m563 346 5 8-1 6-4 2-4-3v-5z" fill="#6155bd" />
      <g fill="#2cc4d3" stroke="#197a87" stroke-width=".6"><path d="m563 278 4 12-7-2z" /><path d="m551 414 9-6-1 7z" /><ellipse cx="563" cy="422" rx="4" ry="1.500" /><path d="M560 434h8l-4 8z" /><path d="M560 528h6l-3 10z" fill="#218b94" /></g>
      <g stroke-width="4" stroke-linecap="butt"><path d="m528 573-27-16" stroke="#4c9c52" /><path d="m528 573 28-15" stroke="#a8394d" /><path d="M528 574v-33" stroke="#3455a5" /></g>
      <g class="axis"><text x="498" y="555" fill="#6ccf70">Y</text><text x="553" y="554" fill="#e0566c">X</text><text x="527" y="542" fill="#8ba6ea">Z</text></g>
      <ellipse cx="531" cy="529" rx="4" ry="2" fill="#173d69" />
      <path d="M588 586v13l3-3 2 5 2-1-2-5h4z" fill="#fff" stroke="#555" />

      <g fill="none" stroke="#3c3c3c" stroke-width="2">
        <path d="m689 458 146-83" stroke-width="2.200" />
        <path d="m722 440 152 88M804 393l153 88" stroke-width="3" />
        <path d="M735 441 806 400 944 480 872 521zM768 460l70-41M804 440l102 61M835 458l35-21M866 475l35-20M847 506l34-21" stroke-width="1.600" />
        <path d="m882 490 8 3M852 507l8 4 30-18M866 514l7 4 33-18-11-4" stroke-width="1.400" />
      </g>
      <g fill="none" stroke="#b2b2b2" stroke-width=".6"><path d="m722 440 152 88M804 393l153 88M689 458l146-83" /></g>

      <g stroke="#999" stroke-width=".8">
        <path d="m1188 216 25-13 25 13-25 14z" fill="#ededed" /><path d="m1188 216 25 14v29l-23-13z" fill="#ececec" /><path d="m1238 216-25 14v29l24-14z" fill="#dedede" />
      </g>
      <g class="cube"><text transform="translate(1208 220) rotate(-28)">TOP</text><text transform="translate(1194 238) rotate(12)">LEFT</text><text transform="translate(1217 243) rotate(-26)">FRONT</text></g>
      <g class="compass"><text transform="translate(1173 273) rotate(-26)">W</text><text transform="translate(1241 268) rotate(28)">S</text><text class="far" transform="translate(1181 232) rotate(20)">N</text><text class="far" transform="translate(1239 232) rotate(28)">E</text></g>
    </svg>
    <div class="edge"></div>
    <p class="viewlabel">[−][Custom View][Shades of Gray]</p>
    <button class="wcs">WCS<svg viewBox="0 0 8 6" aria-hidden="true"><path d="M1 1h6L4 5z" fill="none" stroke="#bbb" /></svg></button>

    <div class="command">
      <output>Command: _SECTIONPLANETOBLOCK</output>
      <div class="entry">
        <div class="grip"><span></span><button aria-label="Close command line">{@render ic('close')}</button><button aria-label="Customize">{@render ic('wrench')}</button></div>
        <button class="recent" aria-label="Recent commands">{@render ic('prompt')}<svg class="tri" viewBox="0 0 6 4"><path d="M0 0h6L3 4z" fill="#777" /></svg></button>
        <label for="cmd">SECTIONPLANETOBLOCK</label>
        <input id="cmd" type="text" value="Select section object:" />
        <button class="hist" aria-label="Command history"><svg class="tri" viewBox="0 0 6 4"><path d="M0 4h6L3 0z" fill="#222" /></svg></button>
      </div>
    </div>
  </main>

  <footer>
    <div class="layouts">
      <button class="on">Model</button><button>Layout1</button><button>Layout2</button><button class="new" aria-label="New layout">+</button>
    </div>
    <div class="status">
      <span class="xyz">3937.3550, 3625.7548, 0.0000</span>
      <button class="space">MODEL</button>
      {@render tools(status)}
      <button class="num">1:1 / 100%</button>
      {@render tools(['>', '|', 'gear', '>', '|', 'plus', '|', 'ruler'])}
      <button class="num">Decimal</button>
      {@render tools(['>', '|', 'props', '|', 'isolate', '|', 'hardware', 'palette', '|', 'clean', 'menu'])}
    </div>
  </footer>
</div>

<style>
  :global(body) { margin: 0; background: #000; }
  .app { display: flex; flex-direction: column; min-height: 100vh; box-sizing: border-box; padding: 16px 0; background: #000; color: #e2e2e2; font: 10px/12px Roboto, "Open Sans", sans-serif; overflow: hidden; }
  button { font: inherit; color: inherit; background: none; border: 0; padding: 0; margin: 0; white-space: nowrap; }
  h1, h2, p { margin: 0; font-weight: 400; font-size: inherit; }
  .ic { width: 14px; height: 14px; flex: none; display: block; }
  .tri { width: 6px; height: 4px; flex: none; display: block; }
  .tool, .drop { display: flex; align-items: center; justify-content: center; flex: none; height: 19px; width: 20px; }
  .drop { width: 12px; }
  .sep { width: 1px; flex: none; background: #6c6c6c; align-self: stretch; }

  header { display: flex; height: 36px; background: #4b4b4b; }
  .logo { width: 32px; height: 33px; flex: none; display: flex; align-items: center; justify-content: center; gap: 2px; background: linear-gradient(#a3a3a3, #616161); border: 1px solid #383838; border-top-color: #aaa; box-sizing: border-box; }
  .mark { width: 19px; height: 20px; }
  .bars { flex: 1; min-width: 0; display: flex; flex-direction: column; }
  .title { display: flex; height: 19px; }
  .quick { width: 212px; flex: none; display: flex; align-items: center; padding-left: 4px; box-sizing: border-box; background: linear-gradient(#999, #707070); }
  .quick .tool { width: 19px; }
  .quick .drop { width: 9px; }
  .quick .ic { width: 13px; height: 13px; }
  .glass { flex: 1; min-width: 0; position: relative; display: flex; align-items: center; justify-content: center; background: #203b64; }
  .wall { position: absolute; inset: 0; width: 100%; height: 100%; }
  h1 { position: relative; display: flex; gap: 12px; color: #0c1420; text-shadow: 0 0 5px #b6c3dc, 0 0 7px #b6c3dc; white-space: nowrap; }
  .find { display: flex; width: 154px; flex: none; }
  .expand { width: 11px; background: #868686; display: flex; align-items: center; justify-content: center; }
  .expand svg { width: 4px; height: 6px; }
  .find input { flex: 1; min-width: 0; border: 0; border-radius: 0; border-left: 1px solid #444; background: #686868; font: italic 10px/12px "Open Sans", sans-serif; color: #ddd; padding: 0 0 0 2px; appearance: none; }
  .find input::placeholder { color: #a9a9a9; opacity: 1; }
  .account { width: 202px; flex: none; display: flex; align-items: center; background: linear-gradient(#9b9b9b, #747474); }
  .sign { flex: 1; display: flex; align-items: center; gap: 4px; }
  .win { width: 97px; flex: none; display: flex; align-items: start; padding-left: 12px; box-sizing: border-box; background: linear-gradient(100deg, #6c5f6c, #252638 30%, #3e4252 60%, #20281f); }
  .win button { width: 21px; height: 14px; border: 1px solid #777b87; border-top: 0; display: grid; place-items: center; box-sizing: border-box; background: #343847; }
  .win .x { width: 40px; }
  .win svg { width: 9px; height: 9px; }

  .menu { display: flex; height: 17px; align-items: center; padding-left: 12px; gap: 18px; background: linear-gradient(#939393, #5e5e5e); color: #ececec; border-top: 1px solid #555; box-sizing: border-box; }
  .mdi { margin-left: auto; display: flex; gap: 5px; padding-right: 2px; }
  .mdi svg { width: 10px; height: 10px; display: block; overflow: visible; }

  .tabs { display: flex; height: 17px; align-items: stretch; background: #464646; color: #d2d2d2; padding-left: 4px; }
  .tabs button { padding: 0 7px; }
  .tabs .on { background: linear-gradient(#6a6a6a, #5b5b5b); color: #fff; border-radius: 3px 3px 0 0; }
  .tabs .play { display: flex; align-items: center; gap: 3px; margin-left: 8px; }

  .ribbon { display: grid; grid-template-columns: 150fr 63fr 136fr 74fr 118fr 60fr 117fr 100fr 137fr 218fr 56fr 51fr; height: 80px; background: linear-gradient(#5c5c5c, #525252 78%, #474747); border-bottom: 1px solid #6b6b6b; box-sizing: border-box; overflow: hidden; }
  section { display: flex; flex-direction: column; min-width: 0; border-right: 1px solid #444; box-shadow: inset 1px 0 #636363; box-sizing: border-box; }
  .body { display: flex; flex: 1; padding-top: 3px; }
  .mid { justify-content: center; }
  .spread { padding-left: 1px; gap: 7px; }
  h2 { display: flex; align-items: center; justify-content: center; gap: 6px; height: 17px; color: #e8e8e8; white-space: nowrap; }
  .htri { width: 6px; height: 4px; }
  .launch { width: 5px; height: 5px; }
  .big { width: 40px; flex: none; display: flex; flex-direction: column; align-items: center; align-self: start; height: 57px; padding-top: 3px; box-sizing: border-box; }
  .big svg:first-child { width: 26px; height: 26px; flex: none; overflow: visible; }
  .big span { white-space: normal; padding-top: 1px; }
  .big .tri { margin-top: 2px; width: 5px; height: 3px; }
  .big.on { width: 36px; background: linear-gradient(#5672a6, #6f8cc0); outline: 1px solid #44598a; }
  .big.wide { width: 48px; }
  .big.slim { width: 34px; }
  .side { align-self: center; margin-left: -12px; width: 8px; padding-top: 28px; }
  .stack { display: flex; flex-direction: column; padding-left: 2px; }
  .inset { padding-left: 6px; }
  .stack.wide { flex: 1; min-width: 0; }
  .line, .text { display: flex; align-items: center; height: 19px; flex: none; }
  .text { gap: 3px; padding-left: 3px; }
  .pick { flex: 1 1 19px; max-height: 18px; min-width: 0; display: flex; align-items: center; gap: 1px; padding: 0 2px 0 0; margin: 0 2px 1px 0; background: #484848; border: 1px solid #3a3a3a; box-sizing: border-box; }
  .line .pick { height: 18px; }
  .pick select { flex: 1; min-width: 0; width: 0; appearance: none; border: 0; padding: 0; background: none; font: inherit; color: #ededed; }
  .layer { padding-left: 3px; }
  .layer select { padding-left: 4px; }
  .swatch { width: 11px; height: 11px; background: #000; margin-left: 4px; }
  .lit { background: #5c7db5; outline: 1px solid #8ba5d4; outline-offset: -1px; }

  .docs { display: flex; align-items: end; height: 22px; background: #393939; border-bottom: 3px solid #6b6b6b; box-sizing: border-box; padding-left: 14px; color: #a9a9a9; }
  .doc { width: 98px; height: 17px; display: flex; justify-content: space-between; align-items: center; padding: 0 8px 0 12px; background: linear-gradient(#575757, #474747); clip-path: polygon(8px 0, 90px 0, 100% 100%, 0 100%); }
  .doc i { font-style: normal; color: #333; }
  .doc.on { background: linear-gradient(#858585, #666); color: #fff; }
  .add { width: 17px; height: 14px; margin: 0 0 1px 10px; border-radius: 6px; background: #575757; color: #ccc; }

  main { flex: 1; min-height: 300px; position: relative; display: flex; flex-direction: column; justify-content: flex-end; background: #fdfdfd; color: #333; }
  .scene { position: absolute; inset: 0; width: 100%; height: 100%; }
  .edge { position: absolute; top: 0; right: 0; bottom: 0; width: 6px; background: linear-gradient(90deg, #b5cbe6 50%, #dfe8d8 50%); }
  .viewlabel { position: absolute; left: 3px; top: 5px; color: #222; }
  .axis { font: 14px "Open Sans", sans-serif; }
  .cube { font: 700 6px "Open Sans", sans-serif; fill: #a8a8a8; }
  .compass { font: 700 13px "Open Sans", sans-serif; fill: #d0d0d0; stroke: #aaa; stroke-width: .5; }
  .compass .far { font-size: 9px; }
  .wcs { position: absolute; right: 49px; top: 123px; height: 13px; width: 36px; border-radius: 4px; background: #e5e5e5; color: #8d8d8d; display: flex; align-items: center; justify-content: center; gap: 4px; }
  .wcs svg { width: 8px; height: 6px; }

  .command { position: relative; margin: 0 260px; font: 9px/12px "DejaVu Sans Mono", monospace; }
  output { display: block; width: max-content; margin-left: 46px; padding: 0 4px; background: #777; border-radius: 2px; color: #eee; }
  .entry { display: flex; align-items: center; height: 22px; border: 1px solid #666; box-sizing: border-box; background: #fff; }
  .grip { display: flex; align-items: center; gap: 5px; height: 100%; width: 43px; flex: none; box-sizing: border-box; padding-left: 2px; background: linear-gradient(#777, #525252); }
  .grip span { width: 5px; height: 15px; background: repeating-linear-gradient(#aaa 0 1px, #555 1px 2px); }
  .grip .ic { width: 11px; height: 11px; }
  .recent { display: flex; align-items: center; gap: 1px; padding: 0 4px; }
  .recent .tri { width: 5px; height: 3px; }
  .entry label { font-weight: 700; color: #222; }
  .entry input { flex: 1; min-width: 0; border: 0; padding: 0; margin-left: 6px; background: none; font: inherit; color: #222; }
  .hist { padding: 0 3px; }

  footer { display: flex; justify-content: space-between; height: 23px; background: #383838; color: #e5e5e5; }
  .layouts { display: flex; align-items: start; padding: 0 0 0 8px; color: #aaa; }
  .layouts button { width: 49px; height: 14px; margin-right: 2px; background: #555; clip-path: polygon(0 0, 100% 0, 43px 100%, 6px 100%); }
  .layouts .on { background: #8b8b8b; color: #fff; font-weight: 700; }
  .layouts .new { width: 22px; clip-path: polygon(0 0, 100% 0, 18px 100%, 4px 100%); }
  .status { display: flex; align-items: center; background: #545454; border-left: 1px solid #777; border-bottom: 1px solid #6b6b6b; box-sizing: border-box; }
  .status .tool { width: 19px; }
  .status .drop { width: 14px; }
  .xyz { width: 145px; text-align: center; white-space: nowrap; }
  .space { width: 42px; border-left: 1px solid #777; border-right: 1px solid #777; align-self: stretch; }
  .status .num { padding: 0 3px; }
</style>
